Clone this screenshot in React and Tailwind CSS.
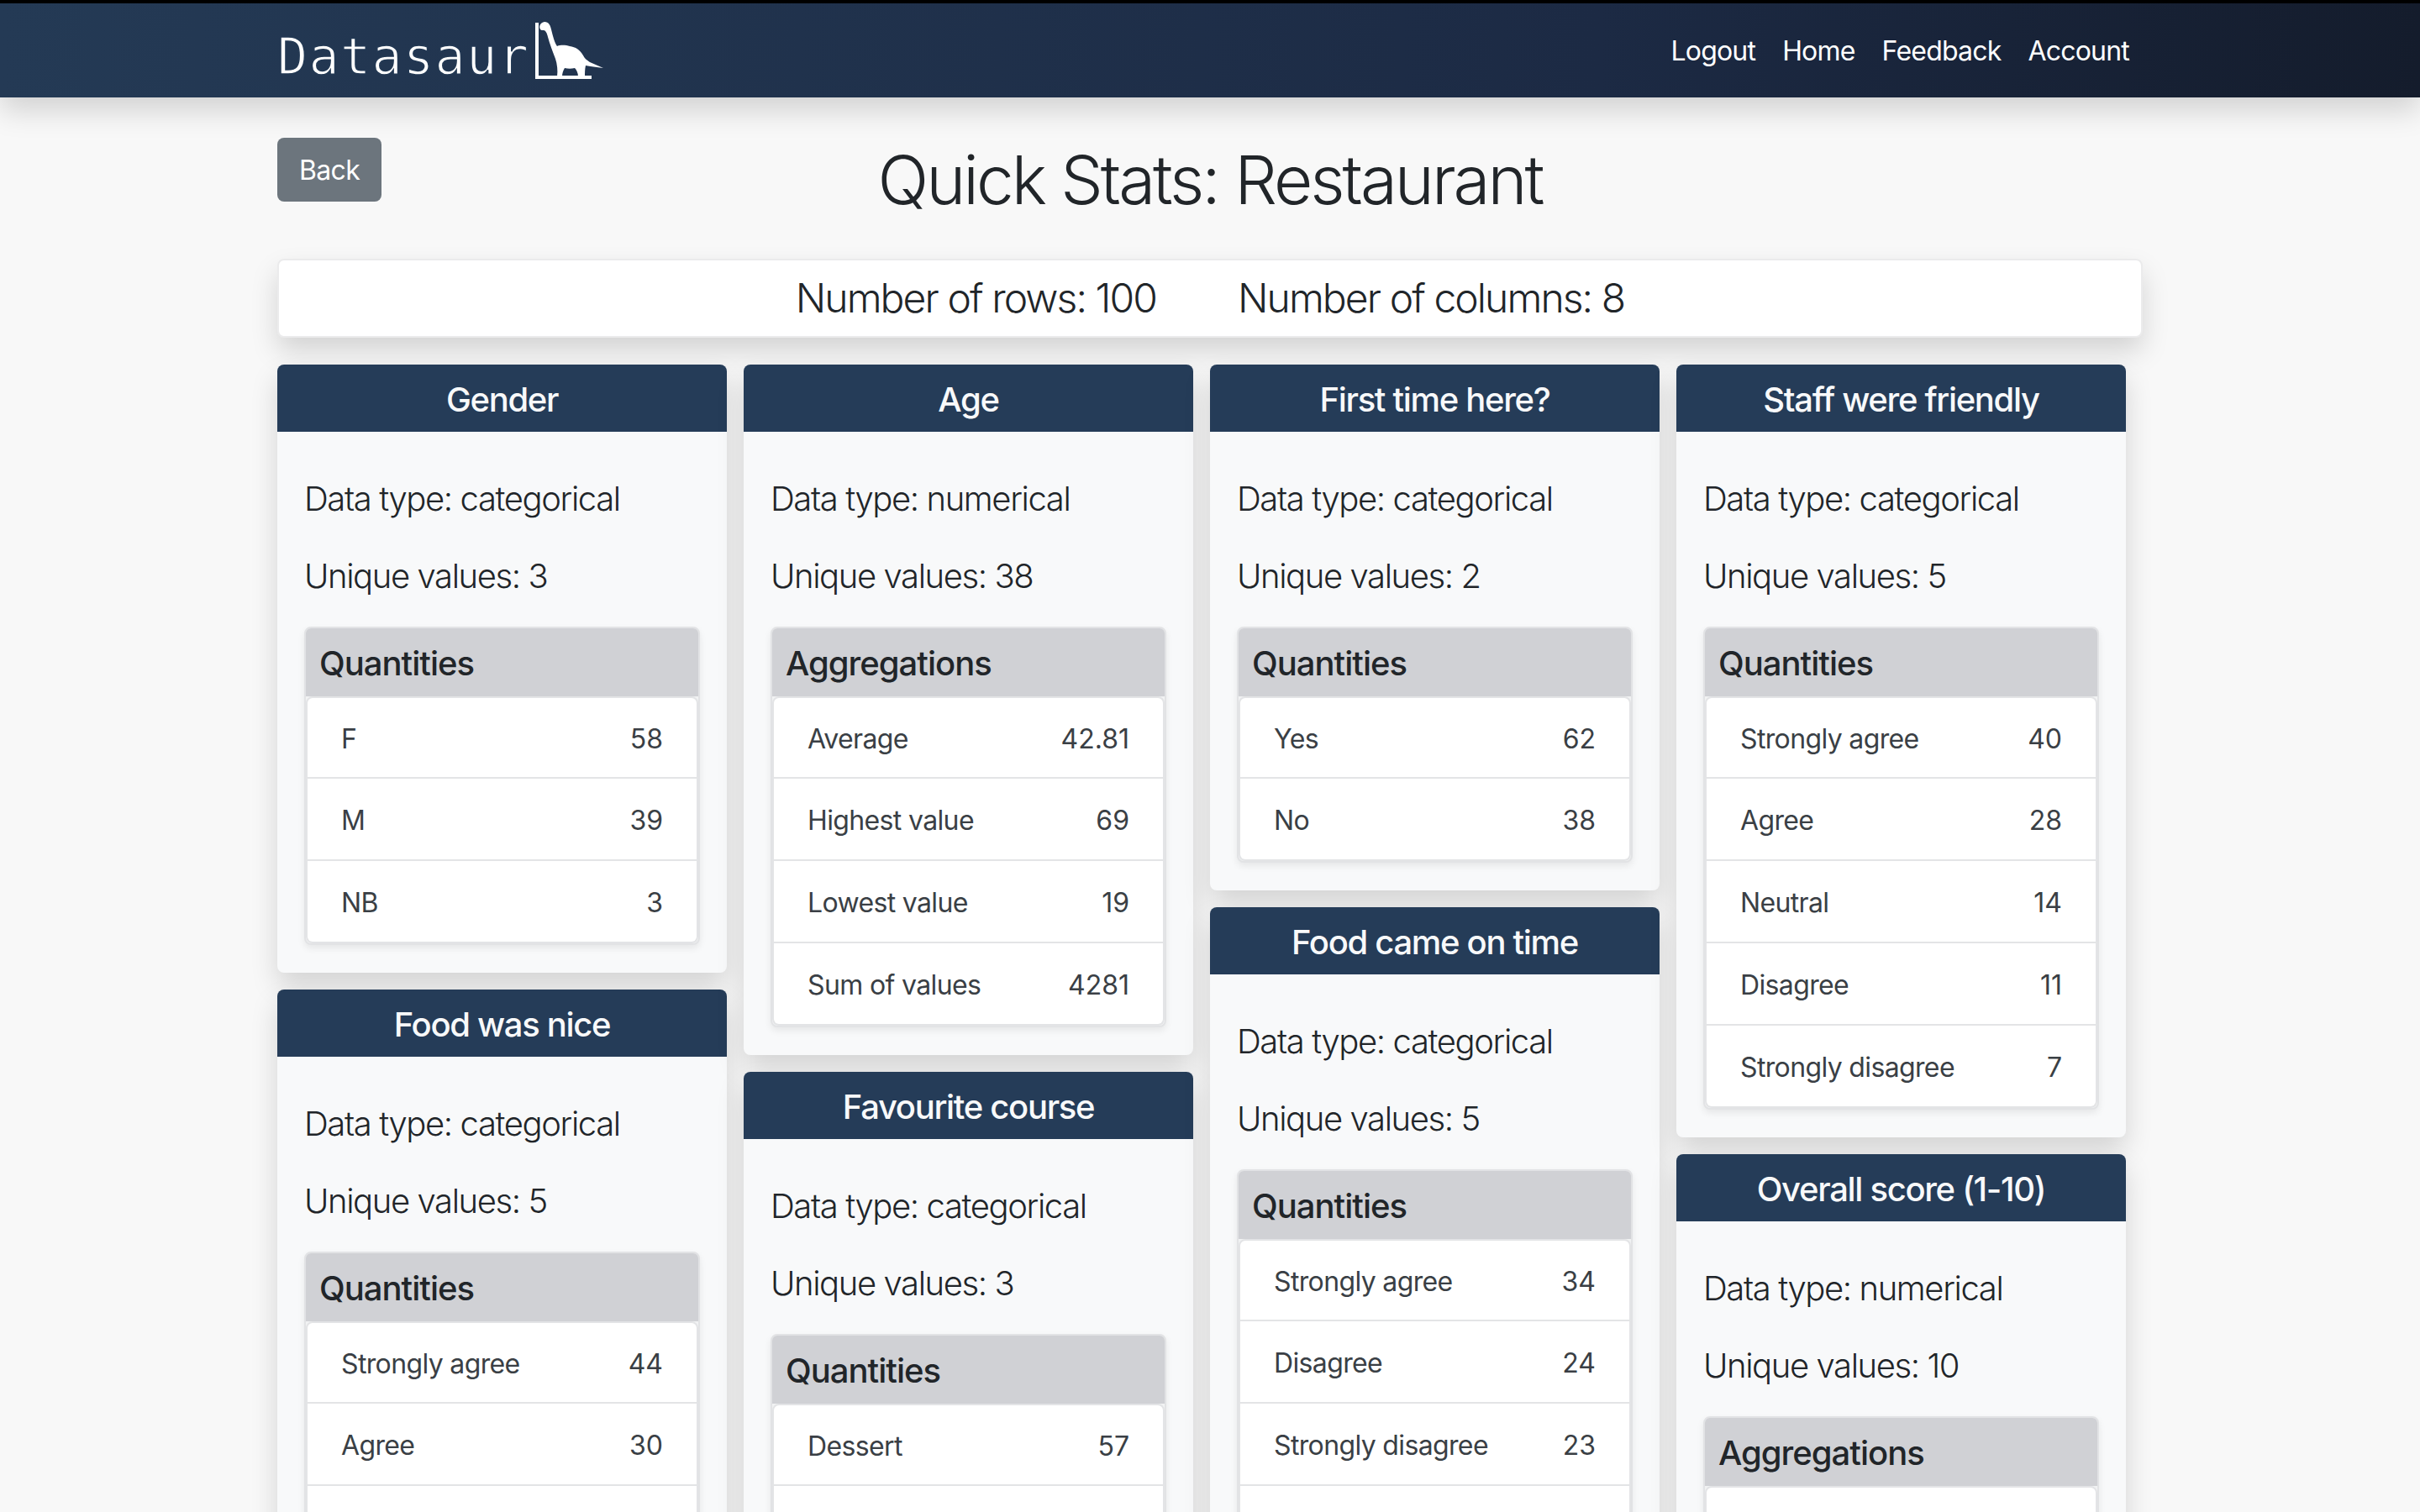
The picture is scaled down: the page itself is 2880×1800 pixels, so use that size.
const columns = [
  [
    { title: 'Gender', type: 'categorical', unique: 3, heading: 'Quantities', rows: [['F', 58], ['M', 39], ['NB', 3]] },
    { title: 'Food was nice', type: 'categorical', unique: 5, heading: 'Quantities', rows: [['Strongly agree', 44], ['Agree', 30], ['', '']] },
  ],
  [
    { title: 'Age', type: 'numerical', unique: 38, heading: 'Aggregations', rows: [['Average', 42.81], ['Highest value', 69], ['Lowest value', 19], ['Sum of values', 4281]] },
    { title: 'Favourite course', type: 'categorical', unique: 3, heading: 'Quantities', rows: [['Dessert', 57], ['', '']] },
  ],
  [
    { title: 'First time here?', type: 'categorical', unique: 2, heading: 'Quantities', rows: [['Yes', 62], ['No', 38]] },
    { title: 'Food came on time', type: 'categorical', unique: 5, heading: 'Quantities', rows: [['Strongly agree', 34], ['Disagree', 24], ['Strongly disagree', 23], ['', '']] },
  ],
  [
    { title: 'Staff were friendly', type: 'categorical', unique: 5, heading: 'Quantities', rows: [['Strongly agree', 40], ['Agree', 28], ['Neutral', 14], ['Disagree', 11], ['Strongly disagree', 7]] },
    { title: 'Overall score (1-10)', type: 'numerical', unique: 10, heading: 'Aggregations', rows: [['', '']] },
  ],
]

const Logo = () => (
  <svg width="90" height="80" viewBox="0 0 90 80" className="block">
    <path d="M7 7h4v63h63v4H7z" fill="#fff" />
    <path d="M13 15C11 11 13 7 18 6C23 6 25 10 26 15C28 23 30 31 33 35C38 33 44 34 48 35C55 36 60 39 64 46C66 50 68 51 72 54L88 61C80 60 72 59 67 58C66 62 66 67 66 71L58 71C58 67 56 63 54 61C50 62 46 62 42 61C40 64 39 68 39 71L33 71C34 64 33 56 31 50C28 42 24 32 22 24C21 19 19 16 17 16C15 16 14 16 13 15Z" fill="#fff" />
  </svg>
)

const StatCard = ({ title, type, unique, heading, rows }) => (
  <div className="rounded-lg bg-[#f8f9fa] shadow-[0_16px_32px_rgba(0,0,0,0.15)]">
    <div className="h-20 rounded-t-lg bg-[#253c58] pt-[18px] text-center text-[40px] leading-[48px] font-medium tracking-[-0.033em] text-[#f8f9fa]">{title}</div>
    <div className="px-8 pt-[50px] pb-[33px]">
      <p className="mb-8 text-[40px] leading-[60px] font-light tracking-[-0.035em] text-[#212529]">Data type: {type}</p>
      <p className="mb-[30px] text-[40px] leading-[60px] font-light tracking-[-0.035em] text-[#212529]">Unique values: {unique}</p>
      <div className="rounded-lg border-2 border-[#e2e3e5] bg-[#f1f2f3] shadow-[0_4px_8px_rgba(0,0,0,0.075)]">
        <div className="h-[81px] rounded-t-md bg-[#d0d1d5] px-4 pt-[18px] text-[40px] leading-[48px] font-medium tracking-[-0.025em] text-[#212529]">{heading}</div>
        <ul>
          {rows.map(([label, value], i) => (
            <li key={i} className="flex h-[98px] items-center justify-between border-x-2 border-b-2 border-[#e3e4e6] bg-white px-10 pt-1 text-[32px] leading-[48px] text-[#3a3f45] first:rounded-t-lg first:border-t-2 last:rounded-b-lg">
              <span className="tracking-[-0.02em]">{label}</span>
              <span>{value}</span>
            </li>
          ))}
        </ul>
      </div>
    </div>
  </div>
)

export default function App() {
  return (
    <div className="h-screen overflow-hidden bg-[#f8f8f8] font-['Inter',sans-serif]">
      <nav className="relative z-10 flex h-[116px] items-center justify-between border-t-4 border-black bg-[linear-gradient(90deg,#243a55,#1c2a44_66%,#141c2c)] pr-[346px] pl-[330px] shadow-[0_16px_32px_rgba(0,0,0,0.15)]">
        <div className="flex items-center">
          <span className="pt-[14px] text-[60px] leading-none tracking-[1.4px] text-white [-webkit-text-stroke:1.5px_#233954] font-['DejaVu_Sans_Mono',monospace]">Datasaur</span>
          <Logo />
        </div>
        <div className="flex gap-8 pt-0.5 text-[32px] tracking-[-0.025em] text-white">
          <a>Logout</a>
          <a>Home</a>
          <a>Feedback</a>
          <a>Account</a>
        </div>
      </nav>
      <main className="mx-[330px] pt-12">
        <div className="grid grid-cols-[1fr_auto_1fr] items-start">
          <button className="h-[76px] w-[124px] justify-self-start rounded-lg bg-[#6c757d] pt-0.5 text-[32px] tracking-[-0.02em] text-white">Back</button>
          <h1 className="mt-0.5 text-[80px] leading-[96px] font-light tracking-[-0.038em] text-[#212529]">Quick Stats: Restaurant</h1>
        </div>
        <div className="mt-[46px] flex h-[94px] items-center justify-center gap-[97px] rounded-lg border-2 border-[#ebebec] bg-white text-[48px] font-light tracking-[-0.04em] text-[#212529] shadow-[0_16px_32px_rgba(0,0,0,0.15)]">
          <span>Number of rows: 100</span>
          <span>Number of columns: 8</span>
        </div>
        <div className="mt-8 flex gap-5">
          {columns.map((cards, i) => (
            <div key={i} className="flex w-[535px] flex-col gap-5">
              {cards.map((card) => <StatCard key={card.title} {...card} />)}
            </div>
          ))}
        </div>
      </main>
    </div>
  )
}
